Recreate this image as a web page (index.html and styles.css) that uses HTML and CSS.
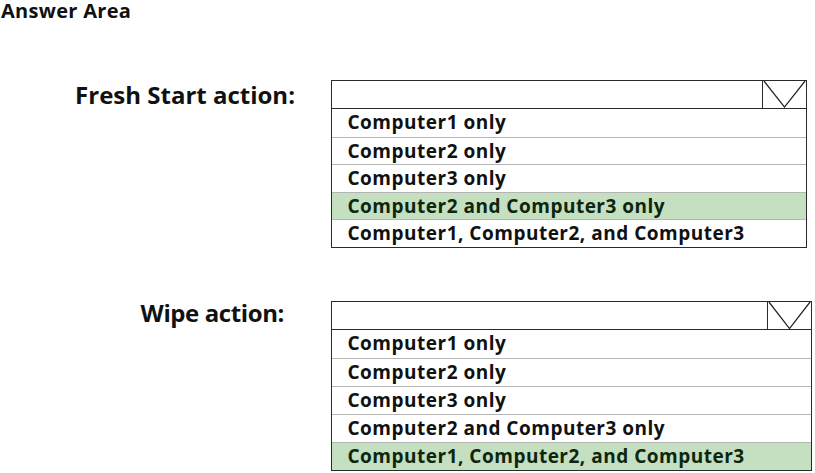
FILE: index.html
```html
<!DOCTYPE html>
<html>
<head>
<meta charset="utf-8">
<link rel="stylesheet" href="styles.css">
</head>
<body>
<div class="title">Answer Area</div>
<div class="section first">
  <div class="label">Fresh Start action:</div>
  <div class="dropdown d1">
    <div class="header"><div class="spacer"></div><div class="arrow"><svg viewBox="0 0 44 28" preserveAspectRatio="none"><polyline points="1,0 22,27 43,0" fill="none" stroke="#222" stroke-width="1.3"/></svg></div></div>
    <div class="option">Computer1 only</div>
    <div class="option">Computer2 only</div>
    <div class="option">Computer3 only</div>
    <div class="option selected">Computer2 and Computer3 only</div>
    <div class="option">Computer1, Computer2, and Computer3</div>
  </div>
</div>
<div class="section second">
  <div class="label">Wipe action:</div>
  <div class="dropdown d2">
    <div class="header"><div class="spacer"></div><div class="arrow"><svg viewBox="0 0 44 28" preserveAspectRatio="none"><polyline points="1,0 22,27 43,0" fill="none" stroke="#222" stroke-width="1.3"/></svg></div></div>
    <div class="option">Computer1 only</div>
    <div class="option">Computer2 only</div>
    <div class="option">Computer3 only</div>
    <div class="option">Computer2 and Computer3 only</div>
    <div class="option selected">Computer1, Computer2, and Computer3</div>
  </div>
</div>
</body>
</html>
```
FILE: styles.css
```css
html, body {
  margin: 0;
  padding: 0;
  background: #fff;
}
body {
  font-family: "Open Sans", "Noto Sans", sans-serif;
  font-weight: 700;
  color: #111;
  width: 815px;
  height: 473px;
  overflow: hidden;
}
.title {
  font-size: 20px;
  line-height: 22px;
  height: 22px;
  padding-left: 1px;
  letter-spacing: 0.3px;
}
.section {
  display: flex;
  align-items: flex-start;
}
.first {
  margin-top: 58px;
}
.second {
  margin-top: 53px;
}
.label {
  width: 295px;
  text-align: right;
  font-size: 24px;
  line-height: 30px;
  flex: none;
}
.second .label {
  margin-top: -3px;
  width: 284px;
  margin-right: 11px;
  letter-spacing: -0.4px;
}
.dropdown {
  margin-left: 36px;
  border: 1.5px solid #2a2a2a;
  flex: none;
}
.d1 { width: 474px; }
.d2 { width: 479px; }
.header {
  display: flex;
  height: 27px;
  border-bottom: 1.5px solid #2a2a2a;
}
.d2 .header { height: 27.5px; }
.spacer { flex: 1; }
.arrow {
  width: 43px;
  border-left: 1.5px solid #2a2a2a;
}
.arrow svg {
  display: block;
  width: 100%;
  height: 100%;
}
.option {
  height: 26.5px;
  line-height: 26px;
  border-top: 1px solid #b5b5b5;
  padding-left: 15.5px;
  font-size: 19px;
  letter-spacing: 0.5px;
  white-space: nowrap;
  box-sizing: content-box;
}
.header + .option { border-top: none; height: 27.5px; }
.d2 .option { height: 27px; }
.d2 .header + .option { height: 28px; }
.selected {
  background: #c5dfc1;
  color: #0d260d;
}
```
